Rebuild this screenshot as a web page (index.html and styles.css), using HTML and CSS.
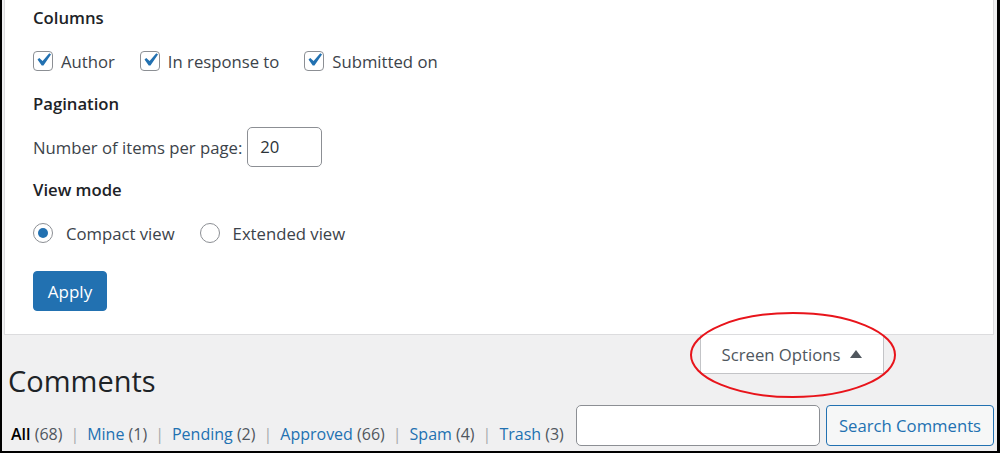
FILE: index.html
```html
<!DOCTYPE html>
<html lang="en">
<head>
    <meta charset="UTF-8">
    <meta name="viewport" content="width=device-width, initial-scale=1.0">
    <title>Comments</title>
    <link rel="stylesheet" href="styles.css">
</head>
<body>
    <div id="frame">
        <div class="screen-meta">
            <div class="legend">Columns</div>
            <div class="row">
                <label class="check"><span class="box"><svg viewBox="0 0 20 20" width="26" height="26"><path d="M14.83 4.89l1.34.94-5.81 8.38H9.02L5.78 9.67l1.34-1.25 2.57 2.4z" fill="#2271b1"/></svg></span>Author</label>
                <label class="check"><span class="box"><svg viewBox="0 0 20 20" width="26" height="26"><path d="M14.83 4.89l1.34.94-5.81 8.38H9.02L5.78 9.67l1.34-1.25 2.57 2.4z" fill="#2271b1"/></svg></span>In response to</label>
                <label class="check"><span class="box"><svg viewBox="0 0 20 20" width="26" height="26"><path d="M14.83 4.89l1.34.94-5.81 8.38H9.02L5.78 9.67l1.34-1.25 2.57 2.4z" fill="#2271b1"/></svg></span>Submitted on</label>
            </div>
            <div class="legend">Pagination</div>
            <div class="row">
                <label class="per-page">Number of items per page:</label>
                <div class="num-input">20</div>
            </div>
            <div class="legend">View mode</div>
            <div class="row">
                <label class="radio"><span class="circle checked"></span>Compact view</label>
                <label class="radio"><span class="circle"></span>Extended view</label>
            </div>
            <button class="apply">Apply</button>
        </div>

        <div class="head-row">
            <h1>Comments</h1>
            <div class="meta-tab">Screen Options <span class="arrow"></span></div>
        </div>

        <div class="list-row">
            <ul class="subsubsub">
                <li><b>All</b> <span class="count">(68)</span></li>
                <li class="sep">|</li>
                <li><a>Mine</a> <span class="count">(1)</span></li>
                <li class="sep">|</li>
                <li><a>Pending</a> <span class="count">(2)</span></li>
                <li class="sep">|</li>
                <li><a>Approved</a> <span class="count">(66)</span></li>
                <li class="sep">|</li>
                <li><a>Spam</a> <span class="count">(4)</span></li>
                <li class="sep">|</li>
                <li><a>Trash</a> <span class="count">(3)</span></li>
            </ul>
            <div class="search-box">
                <div class="search-input"></div>
                <button class="search-btn">Search Comments</button>
            </div>
        </div>

        <svg class="ring" width="210" height="90" viewBox="0 0 210 90">
            <ellipse cx="105" cy="45" rx="102" ry="42" fill="none" stroke="#e8141b" stroke-width="2"/>
        </svg>
    </div>
</body>
</html>
```

FILE: styles.css
```css
body {
    margin: 0;
    padding: 0;
    font-family: "Open Sans", "Noto Sans", sans-serif;
    color: #3c434a;
}
#frame {
    position: relative;
    width: 1000px;
    height: 453px;
    box-sizing: border-box;
    border: 2px solid #000;
    border-right-width: 3px;
    border-top-width: 0;
    background-color: #f0f0f1;
    overflow: hidden;
}
.screen-meta {
    margin: 0 3px 0 2px;
    padding: 2px 28px 23px;
    background-color: #fff;
    border: 1px solid #dcdcde;
    border-top: none;
    display: flex;
    flex-direction: column;
    align-items: flex-start;
}
.legend {
    height: 32px;
    line-height: 32px;
    font-size: 16.7px;
    font-weight: 600;
    color: #1d2327;
}
.row {
    height: 54px;
    display: flex;
    align-items: center;
    font-size: 16.7px;
}
.check, .radio {
    display: flex;
    align-items: center;
    margin-right: 25px;
}
.box {
    width: 20px;
    height: 20px;
    box-sizing: border-box;
    border: 1px solid #8c8f94;
    border-radius: 4px;
    margin-right: 8px;
    display: flex;
    align-items: center;
    justify-content: center;
}
.box svg {
    flex: none;
    margin: -2px 0 0 0;
}
.circle {
    width: 20px;
    height: 20px;
    box-sizing: border-box;
    border: 1px solid #8c8f94;
    border-radius: 50%;
    margin-right: 13px;
    display: flex;
    align-items: center;
    justify-content: center;
}
.circle.checked::before {
    content: "";
    width: 10px;
    height: 10px;
    border-radius: 50%;
    background-color: #2271b1;
}
.per-page {
    margin-right: 5px;
}
.num-input {
    width: 75px;
    height: 40px;
    box-sizing: border-box;
    border: 1px solid #8c8f94;
    border-radius: 5px;
    padding-left: 12px;
    line-height: 38px;
    font-size: 16.7px;
    color: #2c3338;
}
.apply {
    margin-top: 11px;
    width: 74px;
    height: 40px;
    background-color: #2271b1;
    border: 1px solid #2271b1;
    border-radius: 4px;
    color: #fff;
    font-family: inherit;
    font-size: 17px;
    padding: 0;
}
.head-row {
    display: flex;
    align-items: flex-start;
    padding-left: 6px;
}
h1 {
    margin: 26px 0 0;
    font-size: 29px;
    font-weight: 400;
    line-height: 40px;
    color: #1d2327;
}
.meta-tab {
    margin-left: auto;
    margin-right: 113px;
    width: 184px;
    height: 39px;
    box-sizing: border-box;
    background-color: #fff;
    border: 1px solid #c3c4c7;
    border-top: none;
    display: flex;
    align-items: center;
    justify-content: center;
    font-size: 16.7px;
    color: #50575e;
}
.arrow {
    width: 0;
    height: 0;
    margin-left: 10px;
    border-left: 6px solid transparent;
    border-right: 6px solid transparent;
    border-bottom: 8px solid #50575e;
}
.list-row {
    display: flex;
    align-items: flex-start;
    padding-left: 9px;
}
.subsubsub {
    list-style: none;
    margin: 20px 0 0;
    padding: 0;
    display: flex;
    font-size: 16px;
    line-height: 26px;
    color: #50575e;
}
.subsubsub b {
    color: #000;
    font-weight: 600;
}
.subsubsub a {
    color: #2271b1;
}
.sep {
    color: #a7aaad;
    margin: 0 8px;
}
.search-box {
    margin-left: auto;
    margin-right: 3px;
    margin-top: 4px;
    display: flex;
}
.search-input {
    width: 244px;
    height: 41px;
    box-sizing: border-box;
    background-color: #fff;
    border: 1px solid #8c8f94;
    border-radius: 5px;
}
.search-btn {
    margin-left: 6px;
    width: 168px;
    height: 41px;
    background-color: #f6f7f7;
    border: 1px solid #2271b1;
    border-radius: 4px;
    color: #2271b1;
    font-family: inherit;
    font-size: 16.7px;
    padding: 0;
}
.ring {
    position: absolute;
    left: 686px;
    top: 310px;
}
```
